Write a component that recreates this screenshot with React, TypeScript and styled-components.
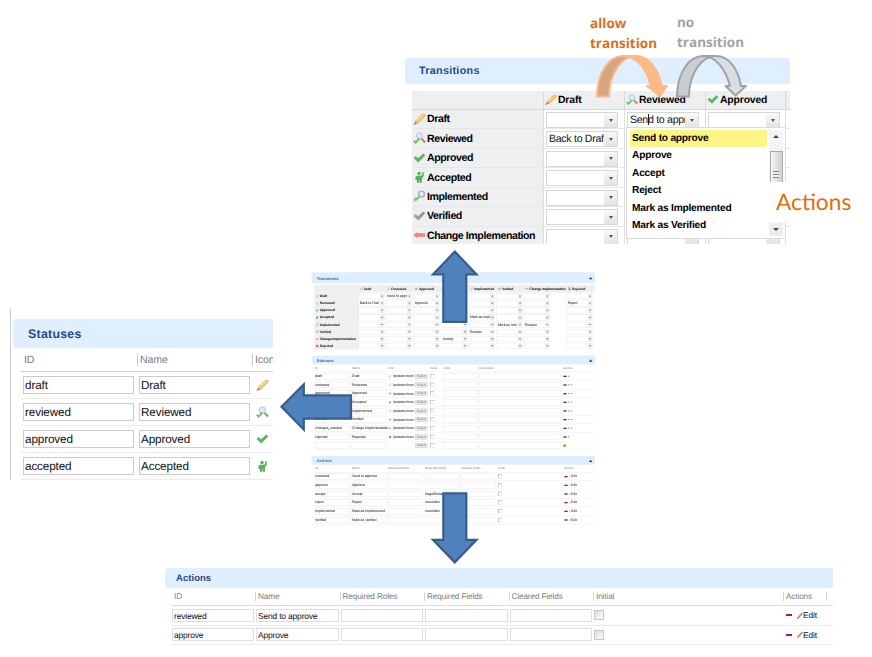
import React from "react";
import styled, { createGlobalStyle } from "styled-components";

const Global = createGlobalStyle`
  html, body { margin: 0; padding: 0; background: #fff; }
  body { font-family: "Liberation Sans", Arial, sans-serif; color: #111; text-rendering: geometricPrecision; }
  *, *::before, *::after { box-sizing: border-box; }
`;

const Canvas = styled.main`
  position: relative;
  width: 872px;
  height: 657px;
  overflow: hidden;
  background: #fff;
`;

/* Pieces placed freely on the diagram canvas */
const Node = styled.section<{ $x: number; $y: number; $w: number; $h: number }>`
  position: absolute;
  left: ${(p) => p.$x}px;
  top: ${(p) => p.$y}px;
  width: ${(p) => p.$w}px;
  height: ${(p) => p.$h}px;
  overflow: hidden;
`;

const Drawing = styled.svg`
  position: absolute;
  inset: 0;
  width: 872px;
  height: 657px;
  pointer-events: none;
`;

const Caption = styled.div<{ $x: number; $y: number; $color: string }>`
  position: absolute;
  left: ${(p) => p.$x}px;
  top: ${(p) => p.$y}px;
  color: ${(p) => p.$color};
  font: 700 13.5px/20px "Open Sans", sans-serif;
  white-space: pre;
`;

const BigCaption = styled.div`
  position: absolute;
  left: 767px;
  top: 182px;
  width: 100px;
  height: 40px;
  padding-left: 9px;
  background: #fff;
  color: #e46c0a;
  font: 400 22.7px/39px Lato, sans-serif;
`;

type IconKind = "pencil" | "review" | "check" | "person" | "implemented" | "verified" | "change" | "reject";

const IconSvg = styled.svg<{ $s: number }>`
  width: ${(p) => p.$s}px;
  height: ${(p) => p.$s}px;
  flex: none;
  display: block;
`;

function Icon({ kind, size = 12 }: { kind: IconKind; size?: number }) {
  return (
    <IconSvg viewBox="0 0 12 12" $s={size}>
      {kind === "pencil" && (
        <g>
          <path d="M.4 11 2 7.8 4.4 9.6Z" fill="#a58468" />
          <path d="M2.2 7.4 8 1.6Q10 .4 11 1.3 11.8 2.4 10.6 3.4L4.8 9.3Z" fill="#efc260" stroke="#d9a650" strokeWidth=".5" />
          <path d="M3.6 7.4 9.4 2" stroke="#fbe3a0" strokeWidth="1" />
        </g>
      )}
      {kind === "review" && (
        <g fill="none">
          <path d="M7.6 6 11.2 9.6" stroke="#b98c6c" strokeWidth="1.9" />
          <circle cx="5.9" cy="3.7" r="2.9" fill="#d8ebf6" stroke="#abcbdd" strokeWidth=".9" />
          <path d="M.7 8 2.5 9.8 6 6" stroke="#74bb78" strokeWidth="1.8" />
        </g>
      )}
      {(kind === "check" || kind === "verified") && (
        <path
          d="M.5 5.6 2.5 3.7 4.7 5.7 9.4 1.3 11.4 3.1 4.9 9.7Z"
          fill={kind === "check" ? "#5cb762" : "#999b9c"}
        />
      )}
      {kind === "person" && (
        <g fill="#58b25c">
          <circle cx="5.6" cy="2.4" r="1.6" />
          <path d="M8.5 1H9.9V4.6L8.3 6.6V10.9H6.3V8.8H5.8V10.9H3.7V8.4H2.3V5.4L3.4 4.4H7.2L8.5 3.6Z" />
        </g>
      )}
      {kind === "implemented" && (
        <g fill="none">
          <circle cx="7.9" cy="3.8" r="2.7" stroke="#a9b4b5" strokeWidth="1.5" />
          <path d="M5.8 5.9 1.2 10.4" stroke="#aab2af" strokeWidth="1.4" />
          <path d="M1 7.4 2.8 9.1 5.6 6.4" stroke="#6bbd73" strokeWidth="1.5" />
        </g>
      )}
      {kind === "change" && <path d="M.4 5.6 3.6 2.9V4H11.2V7.2H3.6V8.3Z" fill="#f4827e" />}
      {kind === "reject" && <path d="M2 2 10 10M10 2 2 10" stroke="#e0353d" strokeWidth="3" />}
    </IconSvg>
  );
}

const PanelTitle = styled.h2<{ $h: number; $fs: number; $pad: number; $ls?: number }>`
  display: flex;
  align-items: center;
  justify-content: space-between;
  height: ${(p) => p.$h}px;
  margin: 0;
  padding: 0 6px 0 ${(p) => p.$pad}px;
  border-radius: 4px 0 0 4px;
  background: #e0efff;
  color: #1f4a86;
  font-size: ${(p) => p.$fs}px;
  font-weight: 700;
  letter-spacing: ${(p) => p.$ls ?? 0}px;
`;

/* ---------- Transitions matrix ---------- */

const Matrix = styled.div`
  margin: 7px 0 0 7px;
  width: 378px;
`;

const MatrixRow = styled.div<{ $head?: boolean }>`
  display: grid;
  grid-template-columns: 131px 81px 81px 80px 5px;
  height: ${(p) => (p.$head ? 19 : 19.45)}px;
  background: ${(p) => (p.$head ? "#eeeff1" : "#fff")};
  border-bottom: 1px solid ${(p) => (p.$head ? "#d6d7da" : "#e6e7ea")};
`;

const MatrixHead = styled.div`
  display: flex;
  align-items: center;
  gap: 1px;
  padding-left: 1px;
  border-left: 1px solid #d9dadd;
  color: #000;
  font-size: 10.4px;
  font-weight: 700;
  letter-spacing: -0.15px;
  white-space: nowrap;
  &:first-child { border-left: 0; }
`;

const MatrixLabel = styled.div`
  display: flex;
  align-items: center;
  gap: 1px;
  padding-left: 1px;
  background: #eeeff1;
  color: #000;
  font-size: 10.6px;
  font-weight: 700;
  letter-spacing: -0.42px;
  white-space: nowrap;
`;

const MatrixCell = styled.div`
  padding: 2px 0 0 2px;
  border-left: 1px solid #dcdde0;
`;

const Select = styled.div`
  display: flex;
  width: 72px;
  height: 16px;
  border: 1px solid #d6d7d9;
  font-size: 10.6px;
  letter-spacing: -0.3px;
  line-height: 14px;
`;

const SelectText = styled.span`
  flex: 1;
  overflow: hidden;
  padding-left: 2px;
  white-space: nowrap;
`;

const SelectButton = styled.span`
  display: grid;
  place-items: center;
  width: 13px;
  background: linear-gradient(#f8f8f8, #e3e4e5);
  &::after {
    content: "";
    border: 2px solid transparent;
    border-top: 3px solid #555;
    border-bottom: 0;
  }
`;

const Caret = styled.i`
  display: inline-block;
  width: 1px;
  height: 11px;
  margin-right: -1px;
  background: #222;
  vertical-align: -2px;
`;

const Menu = styled.div`
  position: absolute;
  left: 221px;
  top: 69px;
  width: 160px;
  height: 112px;
  display: flex;
  justify-content: space-between;
  padding: 2px 2px 2px 3px;
  border: 1px solid #dcdcdc;
  background: #fff;
`;

const MenuList = styled.ul`
  width: 137px;
  margin: 0;
  padding: 0;
  list-style: none;
`;

const MenuItem = styled.li<{ $on?: boolean }>`
  height: 17.45px;
  padding-left: 2px;
  background: ${(p) => (p.$on ? "#fff586" : "transparent")};
  color: #000;
  font-size: 10.2px;
  font-weight: 700;
  letter-spacing: -0.22px;
  line-height: 18px;
  white-space: nowrap;
`;

const ScrollTrack = styled.div`
  display: flex;
  flex-direction: column;
  align-items: center;
  width: 14px;
  background: #f4f4f4;
`;

const ScrollArrow = styled.span<{ $down?: boolean }>`
  display: grid;
  place-items: center;
  width: 14px;
  height: 13px;
  background: ${(p) => (p.$down ? "#ececec" : "#f4f4f4")};
  &::after {
    content: "";
    border: 3px solid transparent;
    ${(p) => (p.$down ? "border-top: 3px solid #444; border-bottom: 0;" : "border-bottom: 3px solid #444; border-top: 0;")}
  }
`;

const ScrollThumb = styled.span`
  display: grid;
  place-items: center;
  width: 13px;
  height: 46px;
  margin: 8px 0 auto;
  border: 1px solid #aaa;
  background: linear-gradient(90deg, #f6f6f6, #cfcfcf);
  &::after {
    content: "";
    width: 6px;
    height: 7px;
    background: repeating-linear-gradient(#888 0 1px, #eee 1px 3px);
  }
`;

type RowDef = [IconKind, string];
const STATES: RowDef[] = [
  ["pencil", "Draft"],
  ["review", "Reviewed"],
  ["check", "Approved"],
  ["person", "Accepted"],
  ["implemented", "Implemented"],
  ["verified", "Verified"],
  ["change", "Change Implemenation"],
];
const MENU = ["Send to approve", "Approve", "Accept", "Reject", "Mark as Implemented", "Mark as Verified"];

function TransitionsPanel() {
  return (
    <Node $x={405} $y={58} $w={385} $h={186}>
      <PanelTitle $h={26} $fs={10.8} $pad={14} $ls={0.28}>Transitions</PanelTitle>
      <Matrix>
        <MatrixRow $head>
          <MatrixHead />
          {STATES.slice(0, 3).map(([k, n]) => (
            <MatrixHead key={n}><Icon kind={k} />{n}</MatrixHead>
          ))}
          <MatrixHead />
        </MatrixRow>
        {STATES.map(([k, n], r) => (
          <MatrixRow key={n}>
            <MatrixLabel><Icon kind={k} size={13} />{n}</MatrixLabel>
            {[0, 1, 2].map((c) => (
              <MatrixCell key={c}>
                <Select>
                  <SelectText>
                    {r === 0 && c === 1 && <>Sen<Caret />d to appr</>}
                    {r === 1 && c === 0 && "Back to Draft"}
                  </SelectText>
                  <SelectButton />
                </Select>
              </MatrixCell>
            ))}
            <MatrixCell />
          </MatrixRow>
        ))}
      </Matrix>
      <Menu>
        <MenuList>
          {MENU.map((m, i) => <MenuItem key={m} $on={i === 0}>{m}</MenuItem>)}
        </MenuList>
        <ScrollTrack>
          <ScrollArrow />
          <ScrollThumb />
          <ScrollArrow $down />
        </ScrollTrack>
      </Menu>
    </Node>
  );
}

/* ---------- Statuses table ---------- */

const StatusFrame = styled.div`
  height: 100%;
  padding: 10px 0 0 2px;
  border-left: 1px solid #ccc;
`;

const StatusRow = styled.div<{ $head?: boolean }>`
  display: grid;
  grid-template-columns: 116px 115px 40px;
  align-items: center;
  height: ${(p) => (p.$head ? 24 : 27)}px;
  margin-left: 8px;
  border-bottom: 1px solid ${(p) => (p.$head ? "#d4d4d4" : "#ececec")};
`;

const StatusHead = styled.div`
  height: 12px;
  padding-left: 2px;
  border-left: 1px solid #ccc;
  color: #7c7c7c;
  font-size: 10.6px;
  letter-spacing: -0.15px;
  line-height: 12px;
  &:first-child { border-left-color: transparent; padding-left: 2px; }
`;

const StatusInput = styled.div`
  width: 111px;
  height: 18px;
  margin-left: 2px;
  padding-left: 1px;
  border: 1px solid #cbcbcb;
  font-size: 11.7px;
  letter-spacing: -0.12px;
  line-height: 17px;
`;

const IconSlot = styled.div`
  padding-left: 4px;
`;

const STATUS_ROWS: [string, string, IconKind][] = [
  ["draft", "Draft", "pencil"],
  ["reviewed", "Reviewed", "review"],
  ["approved", "Approved", "check"],
  ["accepted", "Accepted", "person"],
];

function StatusesPanel() {
  return (
    <Node $x={10} $y={309} $w={263} $h={171}>
      <StatusFrame>
        <PanelTitle $h={29} $fs={12.4} $pad={15} $ls={0.25}>Statuses</PanelTitle>
        <StatusRow $head>
          <StatusHead>ID</StatusHead>
          <StatusHead>Name</StatusHead>
          <StatusHead>Icon</StatusHead>
        </StatusRow>
        {STATUS_ROWS.map(([id, name, k]) => (
          <StatusRow key={id}>
            <StatusInput>{id}</StatusInput>
            <StatusInput>{name}</StatusInput>
            <IconSlot><Icon kind={k} size={13} /></IconSlot>
          </StatusRow>
        ))}
      </StatusFrame>
    </Node>
  );
}

/* ---------- Actions table ---------- */

const ActionRow = styled.div<{ $head?: boolean }>`
  display: grid;
  grid-template-columns: 84px 84.5px 84.5px 84.5px 84.5px 190px 43px 8px;
  align-items: center;
  height: ${(p) => (p.$head ? 18 : 19.5)}px;
  margin-left: 6px;
  border-bottom: 1px solid ${(p) => (p.$head ? "#dadada" : "#ececec")};
`;

const ActionHead = styled.div`
  height: 9px;
  padding-left: 2px;
  border-left: 1px solid #d4d4d4;
  color: #7c7c7c;
  font-size: 8.2px;
  letter-spacing: -0.12px;
  line-height: 9px;
  white-space: nowrap;
  &:first-child { border-left-color: transparent; }
`;

const ActionInput = styled.div`
  height: 13px;
  margin: 0 1px;
  padding-left: 1px;
  border: 1px solid #dedede;
  font-size: 8.5px;
  letter-spacing: -0.2px;
  line-height: 12px;
  white-space: nowrap;
`;

const CheckBox = styled.div`
  width: 10px;
  height: 10px;
  margin-left: 1px;
  border: 1px solid #c6c6c6;
  background: linear-gradient(135deg, #ddd, #fafafa);
`;

const EditCell = styled.div`
  display: flex;
  align-items: center;
  padding-left: 3px;
  font-size: 8.3px;
  letter-spacing: -0.1px;
`;

const Minus = styled.i`
  width: 6px;
  height: 2px;
  margin-right: 5px;
  background: #b0127b;
`;

const PenIcon = styled.svg`
  width: 6px;
  height: 7px;
`;

function Pen() {
  return (
    <PenIcon viewBox="0 0 6 7">
      <path d="M1 6 5.4 1" stroke="#c08a4e" strokeWidth="1.6" />
      <path d="M0 7 .6 5.4 1.4 6.2Z" fill="#333" />
    </PenIcon>
  );
}

function ActionsPanel() {
  return (
    <Node $x={165} $y={568} $w={668} $h={78}>
      <PanelTitle $h={20} $fs={9.5} $pad={11} $ls={0.05}>Actions</PanelTitle>
      <ActionRow $head>
        {["ID", "Name", "Required Roles", "Required Fields", "Cleared Fields", "Initial", "Actions", ""].map((h, i) => (
          <ActionHead key={i}>{h}</ActionHead>
        ))}
      </ActionRow>
      {[["reviewed", "Send to approve"], ["approve", "Approve"]].map(([id, name]) => (
        <ActionRow key={id}>
          <ActionInput>{id}</ActionInput>
          <ActionInput>{name}</ActionInput>
          <ActionInput />
          <ActionInput />
          <ActionInput />
          <CheckBox />
          <EditCell><Minus /><Pen />Edit</EditCell>
        </ActionRow>
      ))}
    </Node>
  );
}

/* ---------- Overview page, laid out at triple size and scaled down ---------- */

const Overview = styled.div`
  width: 858px;
  height: 765px;
  padding: 7px 3px 0 5px;
  transform: scale(0.33333);
  transform-origin: 0 0;
  font-size: 11px;
`;

const OvTitle = styled.h3<{ $h: number }>`
  display: flex;
  align-items: center;
  justify-content: space-between;
  height: ${(p) => p.$h}px;
  margin: 0;
  padding: 2px 8px 0 15px;
  background: #deeeff;
  color: #3a66a0;
  font-size: 12px;
  letter-spacing: 0.2px;
  &::after {
    content: "";
    border: 5px solid transparent;
    border-bottom: 7px solid #1c3155;
    border-top: 0;
  }
`;

const OvMatrix = styled.div`
  margin: 5px 0 18px 8px;
`;

const OvMatrixRow = styled.div<{ $head?: boolean }>`
  display: grid;
  grid-template-columns: 133px 82px 83px 84px 82px 83px 82px 128px 80px;
  align-items: center;
  height: ${(p) => (p.$head ? 23 : 21.4)}px;
  background: ${(p) => (p.$head ? "#eeeff0" : "#fff")};
`;

const OvLabel = styled.div<{ $shade?: boolean }>`
  display: flex;
  align-items: center;
  gap: 2px;
  height: 100%;
  padding-left: 3px;
  background: ${(p) => (p.$shade ? "#eeeff0" : "transparent")};
  color: #111;
  font-size: 10.4px;
  font-weight: 700;
  letter-spacing: -0.45px;
  white-space: nowrap;
`;

const OvSelect = styled.div`
  display: flex;
  width: 77px;
  height: 17px;
  border: 1.5px solid #dcdee2;
  font-size: 10.8px;
  letter-spacing: -0.2px;
  line-height: 15px;
`;

const OvButton = styled.span`
  display: grid;
  place-items: center;
  width: 13px;
  background: #eeeff1;
  &::after { content: ""; border: 3px solid transparent; border-top: 4px solid #666; border-bottom: 0; }
`;

const OvRow = styled.div<{ $cols: string; $head?: boolean }>`
  display: grid;
  grid-template-columns: ${(p) => p.$cols};
  align-items: center;
  height: ${(p) => (p.$head ? 23 : 26)}px;
  margin-left: 10px;
  border-bottom: 1.5px solid #e8e8e8;
  color: ${(p) => (p.$head ? "#888" : "#111")};
  font-size: ${(p) => (p.$head ? 9.2 : 10.8)}px;
  letter-spacing: -0.1px;
  white-space: nowrap;
`;

const OvInput = styled.div`
  height: 18px;
  margin-right: 6px;
  border: 1.5px solid #dfe0e3;
  letter-spacing: -0.25px;
  line-height: 15px;
`;

const OvIconField = styled.div`
  display: grid;
  grid-template-columns: 14px 66px 37px;
  align-items: center;
`;

const OvSelectButton = styled.span`
  height: 14px;
  border: 1px solid #c4c4c4;
  background: #e9e9e9;
  color: #777;
  font-size: 10px;
  line-height: 12px;
  text-align: center;
`;

const OvCheck = styled.div`
  width: 13px;
  height: 13px;
  border: 2px solid #b0b3b8;
  border-right-color: #e4e4e4;
  border-bottom-color: #e4e4e4;
`;

const OvActions = styled.div`
  display: flex;
  align-items: center;
  gap: 4px;
  padding-left: 2px;
  font-size: 10px;
`;

const OvMark = styled.i<{ $c: string; $w: number; $h?: number }>`
  width: ${(p) => p.$w}px;
  height: ${(p) => p.$h ?? 4}px;
  background: ${(p) => p.$c};
`;

const OvEdit = styled.span`
  display: flex;
  align-items: center;
`;

const Gap = styled.div`
  height: 18px;
`;

const OV_STATES: RowDef[] = [...STATES, ["reject", "Rejected"]];
const OV_VALUES: Record<string, string> = {
  "0-1": "Send to appr",
  "1-0": "Back to Draf",
  "1-2": "Approve",
  "1-7": "Reject",
  "3-4": "Mark as Impl",
  "4-5": "Mark as Veri",
  "4-6": "Reopen",
  "5-4": "Reopen",
  "6-3": "Accept",
};
const OV_STATUSES: [string, string, IconKind | null][] = [
  ["draft", "Draft", "pencil"],
  ["reviewed", "Reviewed", "review"],
  ["approved", "Approved", "check"],
  ["accepted", "Accepted", "person"],
  ["implemented", "Implemented", "implemented"],
  ["verified", "Verified", "verified"],
  ["changes_needed", "Change Implementation", "change"],
  ["rejected", "Rejected", "reject"],
  ["", "", null],
];
const OV_ACTIONS = [
  ["reviewed", "Send to approve", ""],
  ["approve", "Approve", ""],
  ["accept", "Accept", "targetRelease"],
  ["reject", "Reject", "resolution"],
  ["implemented", "Mark as implemented", "resolution"],
  ["verified", "Mark as Verified", ""],
];
const STATUS_COLS = "110px 110px 125px 40px 108px 250px 95px";
const ACTION_COLS = "110px 110px 110px 109px 110px 197px 50px 42px";

function OverviewPanel() {
  return (
    <Node $x={310} $y={270} $w={286} $h={256}>
      <Overview>
        <OvTitle $h={33}>Transitions</OvTitle>
        <OvMatrix>
          <OvMatrixRow $head>
            <OvLabel />
            {OV_STATES.map(([k, n]) => (
              <OvLabel key={n}><Icon kind={k} size={11} />{n.replace("Implemenation", "Implementation")}</OvLabel>
            ))}
          </OvMatrixRow>
          {OV_STATES.map(([k, n], r) => (
            <OvMatrixRow key={n}>
              <OvLabel $shade><Icon kind={k} size={11} />{n.replace("Implemenation", "Implementation")}</OvLabel>
              {OV_STATES.map((_, c) => (
                <OvSelect key={c}>
                  <SelectText>{OV_VALUES[`${r}-${c}`]}</SelectText>
                  <OvButton />
                </OvSelect>
              ))}
            </OvMatrixRow>
          ))}
        </OvMatrix>
        <OvTitle $h={26}>Statuses</OvTitle>
        <OvRow $cols={STATUS_COLS} $head>
          {["ID", "Name", "Icon", "Initial", "Color", "Description", "Actions"].map((h) => <span key={h}>{h}</span>)}
        </OvRow>
        {OV_STATUSES.map(([id, name, k], i) => (
          <OvRow key={i} $cols={STATUS_COLS}>
            <OvInput>{id}</OvInput>
            <OvInput>{name}</OvInput>
            <OvIconField>
              {k ? <Icon kind={k} size={10} /> : <span />}
              <span>{k ? "/polarion/icon" : ""}</span>
              <OvSelectButton>Select</OvSelectButton>
            </OvIconField>
            <OvCheck />
            <OvInput />
            <OvInput />
            <OvActions>
              {k ? (
                <><OvMark $c="#8b1c68" $w={10} /><OvMark $c="#888" $w={4} $h={3} />{i > 0 && i < 7 && <OvMark $c="#999" $w={5} $h={3} />}</>
              ) : (
                <OvMark $c="#8fb520" $w={8} $h={8} />
              )}
            </OvActions>
          </OvRow>
        ))}
        <Gap />
        <OvTitle $h={26}>Actions</OvTitle>
        <OvRow $cols={ACTION_COLS} $head>
          {["ID", "Name", "Required Roles", "Required Fields", "Cleared Fields", "Initial", "Actions"].map((h) => <span key={h}>{h}</span>)}
        </OvRow>
        {OV_ACTIONS.map(([id, name, field]) => (
          <OvRow key={id} $cols={ACTION_COLS}>
            <OvInput>{id}</OvInput>
            <OvInput>{name}</OvInput>
            <OvInput />
            <OvInput>{field}</OvInput>
            <OvInput />
            <OvCheck />
            <OvActions><OvMark $c="#a01070" $w={10} /><OvEdit><Pen />Edit</OvEdit></OvActions>
          </OvRow>
        ))}
      </Overview>
    </Node>
  );
}

/* ---------- Arrows ---------- */

function Arrows() {
  return (
    <Drawing viewBox="0 0 872 657">
      <g fill="#4f81bd" stroke="#385d8a" strokeWidth="2.2">
        <path d="M454.8 251.5 476.5 274.5H466.3V321.8H443.3V274.5H433Z" />
        <path d="M443.3 493.3H466.3V539.8H476.5L454.8 562.3 433 539.8H443.3Z" />
        <path d="M281.5 406.8 303.8 384.5V395.3H351V418.7H303.8V429.5Z" />
      </g>
      <g strokeWidth="2" strokeLinejoin="round">
        <path d="M597 96.5C597 73 609 56 623 56H636C622 56 609 73 609 96.5Z" fill="#d7a680" stroke="#fab78a" />
        <path d="M623 56H636C649 56 658 69 662 86H667L660 96 647 86H651C647 71 638 56 623 56Z" fill="#fcba88" stroke="#fcba88" />
        <path d="M677 96.5C677 73 689 56 703 56H716C702 56 689 73 689 96.5Z" fill="#c9ced2" stroke="#a0a3a6" />
        <path d="M703 56H716C729 56 738 69 741 86H746L735.5 95.5 725.5 86H730C726 71 717 56 703 56Z" fill="#d9dee2" stroke="#a0a3a6" />
      </g>
    </Drawing>
  );
}

export default function App() {
  return (
    <>
      <Global />
      <Canvas>
        <TransitionsPanel />
        <BigCaption>Actions</BigCaption>
        <StatusesPanel />
        <OverviewPanel />
        <ActionsPanel />
        <Caption $x={590} $y={13} $color="#dc6c1c">{"allow\ntransition"}</Caption>
        <Caption $x={677} $y={12} $color="#a3a3a3">{"no\ntransition"}</Caption>
        <Arrows />
      </Canvas>
    </>
  );
}
